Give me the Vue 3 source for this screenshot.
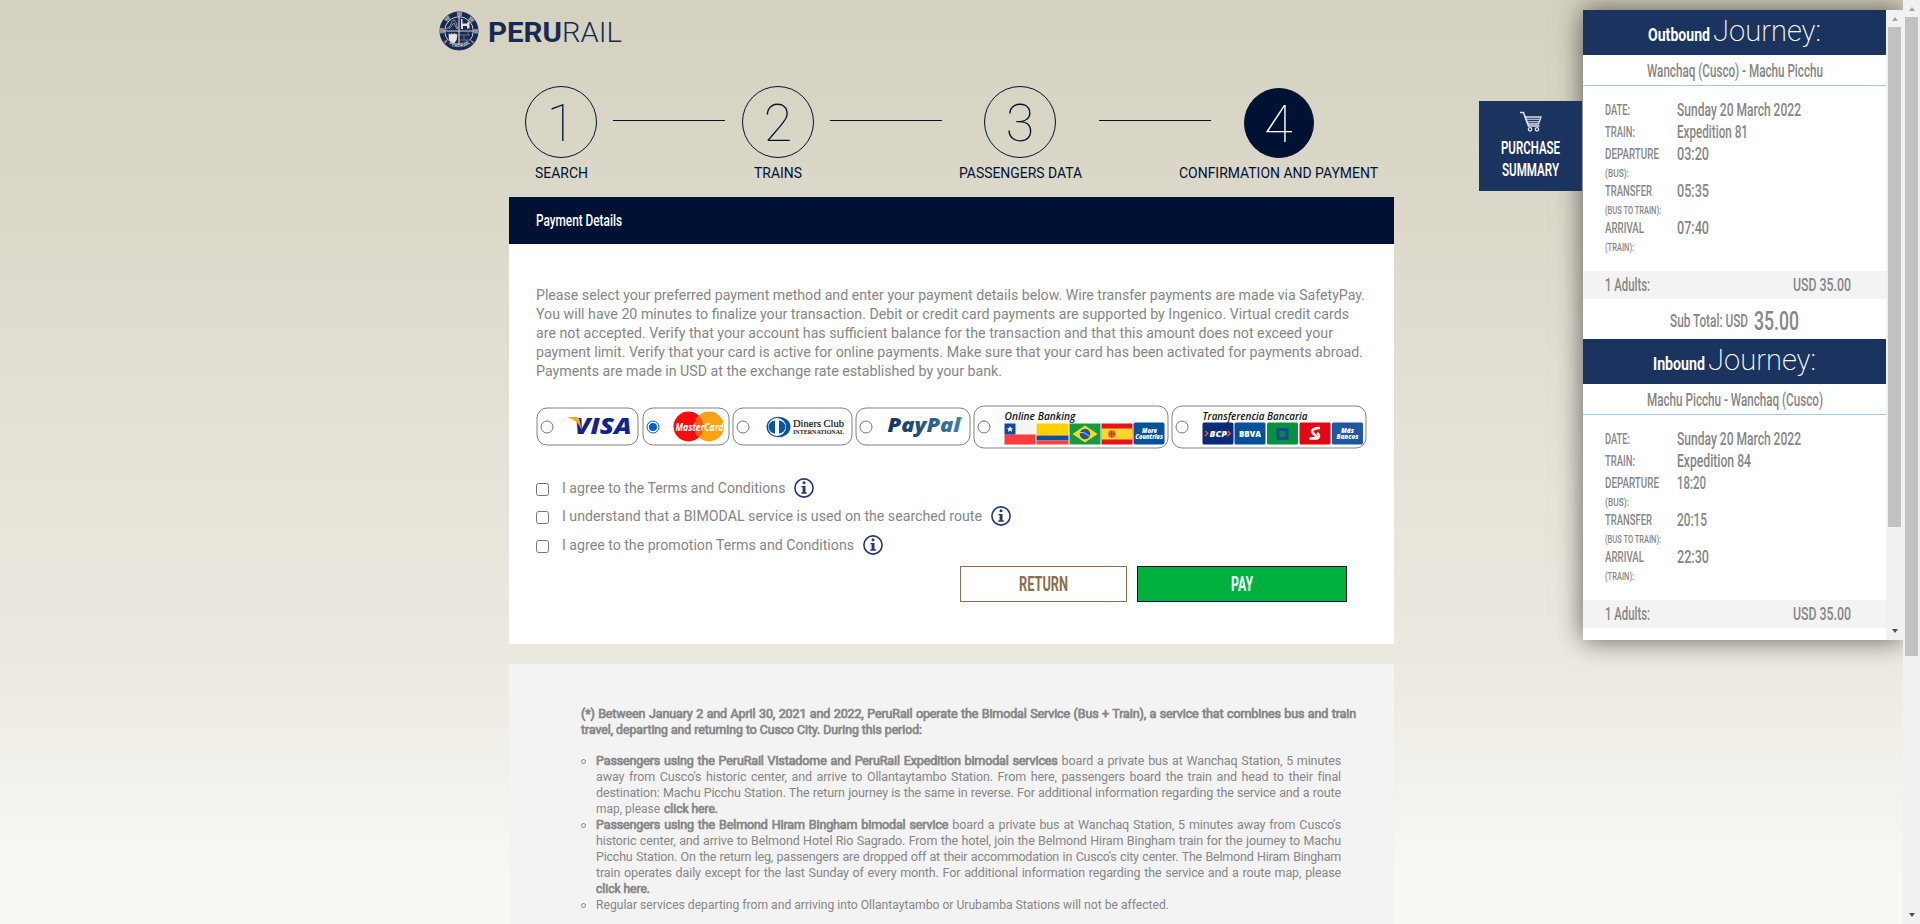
<script setup>
import { h } from 'vue'

const Fit = (p) =>
  h('svg', { width: p.w, height: p.lh, class: 'fit' }, [
    h('text', { x: 0, y: p.b, 'font-size': p.s, textLength: p.w, lengthAdjust: 'spacingAndGlyphs', fill: 'currentColor' }, p.t),
  ])
Fit.props = ['t', 'w', 's', 'lh', 'b']

const steps = [
  { n: '1', label: 'SEARCH', w: 53, line: true },
  { n: '2', label: 'TRAINS', w: 48, line: true },
  { n: '3', label: 'PASSENGERS DATA', w: 123, line: true },
  { n: '4', label: 'CONFIRMATION AND PAYMENT', w: 199, active: true },
]

const intro = [
  ['Please select your preferred payment method and enter your payment details below. Wire transfer payments are made via SafetyPay.', 829],
  ['You will have 20 minutes to finalize your transaction. Debit or credit card payments are supported by Ingenico. Virtual credit cards', 813],
  ['are not accepted. Verify that your account has sufficient balance for the transaction and that this amount does not exceed your', 797],
  ['payment limit. Verify that your card is active for online payments. Make sure that your card has been activated for payments abroad.', 827],
  ['Payments are made in USD at the exchange rate established by your bank.', 466],
]

const agreements = [
  { t: 'I agree to the Terms and Conditions', w: 223.5 },
  { t: 'I understand that a BIMODAL service is used on the searched route', w: 420 },
  { t: 'I agree to the promotion Terms and Conditions', w: 292 },
]

const journeys = [
  {
    dir: 'Outbound', dw: 62, jw: 108, route: 'Wanchaq (Cusco) - Machu Picchu', rw: 176,
    rows: [
      { l: 'DATE:', lw: 25, v: 'Sunday 20 March 2022', vw: 124 },
      { l: 'TRAIN:', lw: 30, v: 'Expedition 81', vw: 71 },
      { l: 'DEPARTURE', lw: 54, v: '03:20', vw: 32, sub: '(BUS):', sw: 24 },
      { l: 'TRANSFER', lw: 47, v: '05:35', vw: 32, sub: '(BUS TO TRAIN):', sw: 56 },
      { l: 'ARRIVAL', lw: 39, v: '07:40', vw: 32, sub: '(TRAIN):', sw: 29 },
    ],
  },
  {
    dir: 'Inbound', dw: 52, jw: 108, route: 'Machu Picchu - Wanchaq (Cusco)', rw: 176,
    rows: [
      { l: 'DATE:', lw: 25, v: 'Sunday 20 March 2022', vw: 124 },
      { l: 'TRAIN:', lw: 30, v: 'Expedition 84', vw: 74 },
      { l: 'DEPARTURE', lw: 54, v: '18:20', vw: 29, sub: '(BUS):', sw: 24 },
      { l: 'TRANSFER', lw: 47, v: '20:15', vw: 30, sub: '(BUS TO TRAIN):', sw: 56 },
      { l: 'ARRIVAL', lw: 39, v: '22:30', vw: 32, sub: '(TRAIN):', sw: 29 },
    ],
  },
]
</script>

<template>
  <div class="page">
    <header class="logo">
      <svg width="40" height="40" viewBox="0 0 40 40">
        <circle cx="20" cy="20" r="19.5" fill="#182a54" />
        <circle cx="20" cy="20" r="17" fill="none" stroke="#b5b6b3" stroke-width="4" stroke-dasharray="5.2 8.15" stroke-dashoffset="2.6" opacity=".75" />
        <circle cx="20" cy="20" r="14.3" fill="#182a54" stroke="#d0cfc3" stroke-width="1" />
        <path d="M20 5.5v29M5.5 20h29" stroke="#d5d2c2" stroke-width="1.2" />
        <path d="M7 18c3-1 4-3 5-5s1.500-4 3-4 2.500 3 3.500 9M10 18l5-6 3 6" fill="none" stroke="#aeb2b8" stroke-width=".8" />
        <path d="M22 8h1.500v4.500h4.500l1-2h1.500v7H28v-2.500h-4V18h-2z" fill="#e2e0d6" />
        <path d="M9.500 22.500l2 1 1-1.500 1.500 1.500 1.500-1.500 1.500 1.500 1.500-.5-1 6-2 3h-3l-2.500-3z" fill="#e9e5d8" />
        <path d="M21 24h10M25 24v5M21 29h10M29 24v-3M27 29v4M22 32h7" fill="none" stroke="#73809b" stroke-width=".8" />
        <path id="rim" d="M7.500 31a17.200 17.200 0 0 0 25 0" fill="none" stroke="#182a54" stroke-width="5" />
        <text font-size="5" font-weight="700" fill="#c9c8bf"><textPath href="#rim" startOffset="3">PERURAIL</textPath></text>
      </svg>
      <div class="wordmark">
        <Fit class="bold" t="PERU" :w="74" :s="28" :lh="40" :b="30.500" />
        <Fit class="light" t="RAIL" :w="60" :s="28.500" :lh="40" :b="30.500" />
      </div>
    </header>

    <main class="content">
      <nav class="steps">
        <template v-for="s in steps" :key="s.n">
          <div class="step" :class="'step-' + s.n">
            <div class="circle" :class="{ active: s.active }">{{ s.n }}</div>
            <Fit class="step-label" :t="s.label" :w="s.w" :s="14" :lh="18" :b="15" />
          </div>
          <i v-if="s.line" class="line" :class="'line-' + s.n"></i>
        </template>
      </nav>

      <section class="card">
        <div class="card-head"><Fit class="medium" t="Payment Details" :w="86" :s="17" :lh="47" :b="29" /></div>
        <div class="card-body">
          <div class="intro">
            <Fit v-for="l in intro" :key="l[0]" :t="l[0]" :w="l[1]" :s="14.500" :lh="19" :b="14" />
          </div>

          <div class="methods">
            <svg width="103" height="46" viewBox="535.500 403.500 103 46">
              <rect class="frame" x="536.500" y="407.500" width="101" height="37" rx="10" />
              <circle class="radio" cx="546.500" cy="426.500" r="6" />
              <text x="574" y="433.500" font-family="Open Sans" font-style="italic" font-weight="800" font-size="23" textLength="57" lengthAdjust="spacingAndGlyphs" fill="#10248c">VISA</text>
              <path d="M566.500 416.500h9.500q2.500 0 3 2.500l2 10q-4-9.500-14.500-12.500z" fill="#f3a621" />
            </svg>
            <svg class="gap4" width="88" height="46" viewBox="641.500 403.500 88 46">
              <rect class="frame" x="642.500" y="407.500" width="86" height="37" rx="10" />
              <circle cx="652.500" cy="426.500" r="6" fill="#fff" stroke="#0560cc" />
              <circle cx="652.500" cy="426.500" r="4" fill="#0560cc" />
              <circle cx="688" cy="426" r="15" fill="#fb0a0d" />
              <circle cx="708.500" cy="426" r="15" fill="#fca113" />
              <path d="M698.200 415a15 15 0 0 1 0 22a15 15 0 0 1 0-22" fill="#f75a18" />
              <text x="675" y="430" font-family="Open Sans" font-style="italic" font-weight="700" font-size="10" textLength="48" lengthAdjust="spacingAndGlyphs" fill="#fff">MasterCard</text>
            </svg>
            <svg width="121" height="46" viewBox="731.500 403.500 121 46">
              <rect class="frame" x="732.500" y="407.500" width="119" height="37" rx="10" />
              <circle class="radio" cx="742.500" cy="426.500" r="6" />
              <ellipse cx="778" cy="426.500" rx="12" ry="10.300" fill="#07569e" />
              <circle cx="776.500" cy="426.500" r="9" fill="#fff" />
              <path d="M774.500 420v13a6.500 6.500 0 0 1 0-13zM778.500 420v13a6.500 6.500 0 0 0 0-13z" fill="#07569e" />
              <text x="792.500" y="426.500" font-family="Liberation Serif" font-size="10.500" textLength="51" lengthAdjust="spacingAndGlyphs" fill="#111" stroke="#111" stroke-width=".2">Diners Club</text>
              <text x="792.500" y="433" font-family="Liberation Serif" font-weight="700" font-size="6.500" textLength="51" lengthAdjust="spacingAndGlyphs" fill="#222">INTERNATIONAL</text>
            </svg>
            <svg width="116" height="46" viewBox="854.500 403.500 116 46">
              <defs>
                <linearGradient id="pp"><stop offset="0" stop-color="#12345c" /><stop offset="1" stop-color="#3f7dad" /></linearGradient>
              </defs>
              <rect class="frame" x="855.500" y="407.500" width="114" height="37" rx="10" />
              <circle class="radio" cx="865.500" cy="426.500" r="6" />
              <text x="887" y="431.500" font-family="Open Sans" font-style="italic" font-weight="800" font-size="20" textLength="73" lengthAdjust="spacingAndGlyphs" fill="url(#pp)">PayPal</text>
              <text x="960" y="420" font-size="4" fill="#3f7dad">™</text>
            </svg>
            <svg width="196" height="46" viewBox="972.500 403.500 196 46">
              <rect class="frame" x="973.500" y="405.500" width="194" height="42" rx="10" />
              <circle class="radio" cx="983.500" cy="426.500" r="6" />
              <text class="bank-title" x="1004" y="419" textLength="71" lengthAdjust="spacingAndGlyphs">Online Banking</text>
              <path d="M1004 423h31v21h-31z" fill="#f5f5f5" /><path d="M1004 434h31v10h-31z" fill="#fd3c3c" /><path d="M1004 423h11v11h-11z" fill="#11479c" />
              <path d="M1009.500 425.500l1 2.200h2.300l-1.800 1.400.7 2.300-2.200-1.400-2.200 1.400.7-2.300-1.800-1.400h2.300z" fill="#fff" />
              <path d="M1036 423h32v12h-32z" fill="#fdd000" /><path d="M1036 435h32v5h-32z" fill="#184a9e" /><path d="M1036 440h32v4h-32z" fill="#f3453b" />
              <path d="M1069 423h31v21h-31z" fill="#139a43" /><path d="M1072 433.500l12.500-8.500 12.500 8.500-12.500 8.500z" fill="#ffdc12" /><circle cx="1084.500" cy="433.500" r="5.300" fill="#21559c" /><path d="M1079.500 432q5-1 9.500 4" fill="none" stroke="#a9d7df" />
              <path d="M1101 423h31v21h-31z" fill="#e9111b" /><path d="M1101 428h31v11h-31z" fill="#ffd52b" /><rect x="1108" y="430" width="7" height="7" rx="2" fill="#cf6538" /><path d="M1111 430v7M1108 433.500h7" stroke="#9d453a" stroke-width=".8" />
              <rect x="1133" y="422" width="31" height="22" rx="2" fill="#07529a" />
              <text class="tile" x="1141.500" y="432" font-size="6" textLength="15" lengthAdjust="spacingAndGlyphs">More</text>
              <text class="tile" x="1134.800" y="438.500" font-size="6" textLength="27.500" lengthAdjust="spacingAndGlyphs">Countries</text>
            </svg>
            <svg width="196" height="46" viewBox="1170.500 403.500 196 46">
              <rect class="frame" x="1171.500" y="405.500" width="194" height="42" rx="10" />
              <circle class="radio" cx="1181.500" cy="426.500" r="6" />
              <text class="bank-title" x="1202" y="419" textLength="105" lengthAdjust="spacingAndGlyphs">Transferencia Bancaria</text>
              <rect x="1202" y="422" width="31" height="22" rx="1.500" fill="#082c77" />
              <text class="tile" x="1209" y="436" font-size="8.500" textLength="17.500" lengthAdjust="spacingAndGlyphs">BCP</text>
              <path d="M1205 430.500l2.300 2.500-3 2.500M1227.500 430.500l2.300 2.500-3 2.500" fill="none" stroke="#f05423" stroke-width="1.500" />
              <rect x="1234" y="422" width="31" height="22" rx="1.500" fill="#04509b" />
              <text class="tile upright" x="1238.500" y="436" font-size="8.500" textLength="22" lengthAdjust="spacingAndGlyphs">BBVA</text>
              <rect x="1266.500" y="422" width="31" height="22" rx="1.500" fill="#059340" /><rect x="1277.500" y="429" width="9" height="9" fill="#0c8641" stroke="#174a9b" stroke-width="3" />
              <rect x="1299" y="422" width="31" height="22" rx="1.500" fill="#e30613" />
              <path d="M1319.500 427.500c-6 0-9 2-7.500 4.500s5 3 3.500 5.500l-6 .8M1309 438h6c3.500 0 5-3.500 1.500-5.500" fill="none" stroke="#fff" stroke-width="2.500" />
              <rect x="1331.500" y="422" width="31" height="22" rx="1.500" fill="#2156a0" />
              <text class="tile" x="1340.500" y="432" font-size="6" textLength="13" lengthAdjust="spacingAndGlyphs">Más</text>
              <text class="tile" x="1336" y="438.500" font-size="6" textLength="22" lengthAdjust="spacingAndGlyphs">Bancos</text>
            </svg>
          </div>

          <div class="agreements">
            <label v-for="a in agreements" :key="a.t" class="agree">
              <input type="checkbox" />
              <Fit :t="a.t" :w="a.w" :s="14.500" :lh="20" :b="15" />
              <svg class="info" width="20" height="20" viewBox="0 0 20 20">
                <circle cx="10" cy="10" r="9.100" fill="none" stroke="#28377a" stroke-width="1.600" />
                <circle cx="10" cy="4.800" r="1.500" fill="#28377a" />
                <path d="M7.500 8h4v6.300h1.300v1.400H7.300v-1.400h1.300V9.300H7.500z" fill="#28377a" />
              </svg>
            </label>
          </div>

          <div class="actions">
            <button class="return"><Fit class="bold" t="RETURN" :w="49" :s="20" :lh="34" :b="24" /></button>
            <button class="pay"><Fit class="bold" t="PAY" :w="22" :s="20" :lh="34" :b="24" /></button>
          </div>
        </div>
      </section>

      <section class="notes">
        <div class="lead">
          <p class="strong just">(*) Between January 2 and April 30, 2021 and 2022, PeruRail operate the Bimodal Service (Bus + Train), a service that combines bus and train</p>
          <Fit class="strong" t="travel, departing and returning to Cusco City. During this period:" :w="341" :s="12.500" :lh="16" :b="12" />
        </div>
        <ul>
          <li>
            <p class="just"><b>Passengers using the PeruRail Vistadome and PeruRail Expedition bimodal services</b> board a private bus at Wanchaq Station, 5 minutes</p>
            <p class="just">away from Cusco's historic center, and arrive to Ollantaytambo Station. From here, passengers board the train and head to their final</p>
            <p class="just">destination: Machu Picchu Station. The return journey is the same in reverse. For additional information regarding the service and a route</p>
            <p class="end"><Fit t="map, please" :w="64" :s="12.500" :lh="16" :b="12" /><Fit class="strong" t="click here." :w="54" :s="12.500" :lh="16" :b="12" /></p>
          </li>
          <li>
            <p class="just"><b>Passengers using the Belmond Hiram Bingham bimodal service</b> board a private bus at Wanchaq Station, 5 minutes away from Cusco's</p>
            <p class="just">historic center, and arrive to Belmond Hotel Rio Sagrado. From the hotel, join the Belmond Hiram Bingham train for the journey to Machu</p>
            <p class="just tight">Picchu Station. On the return leg, passengers are dropped off at their accommodation in Cusco's city center. The Belmond Hiram Bingham</p>
            <p class="just">train operates daily except for the last Sunday of every month. For additional information regarding the service and a route map, please</p>
            <p class="end"><Fit class="strong" t="click here." :w="54" :s="12.500" :lh="16" :b="12" /></p>
          </li>
          <li>
            <p class="end"><Fit t="Regular services departing from and arriving into Ollantaytambo or Urubamba Stations will not be affected." :w="573" :s="12.500" :lh="16" :b="12" /></p>
          </li>
        </ul>
      </section>
    </main>

    <aside class="summary">
      <div class="tab">
        <svg width="24" height="22" viewBox="0 0 24 22" fill="none" stroke="#dce0e8">
          <path d="M1 1.500h3.500l5 13.500h11" stroke-width="1.600" />
          <path d="M6 6h16l-2.500 7H9z" stroke-width="1.300" />
          <path d="M7 8.300h14M8 10.700h12" stroke-width="1.100" />
          <circle cx="11" cy="18.300" r="1.700" stroke-width="1.300" /><circle cx="18" cy="18.300" r="1.700" stroke-width="1.300" />
        </svg>
        <Fit class="semi" t="PURCHASE" :w="59" :s="18" :lh="22" :b="18" />
        <Fit class="semi" t="SUMMARY" :w="57" :s="18" :lh="22" :b="18" />
      </div>
      <div class="panel">
        <div class="scroll">
          <section v-for="j in journeys" :key="j.dir" class="journey">
            <h2>
              <Fit class="bold" :t="j.dir" :w="j.dw" :s="18.500" :lh="45" :b="31" />
              <Fit class="thin" t="Journey:" :w="j.jw" :s="30" :lh="45" :b="31" />
            </h2>
            <div class="route"><Fit :t="j.route" :w="j.rw" :s="17.500" :lh="30" :b="22" /></div>
            <div class="details">
              <div v-for="r in j.rows" :key="r.l" class="row">
                <div class="key">
                  <Fit :t="r.l" :w="r.lw" :s="15.500" :lh="22" :b="15" />
                  <Fit v-if="r.sub" :t="r.sub" :w="r.sw" :s="10.500" :lh="15" :b="11" />
                </div>
                <Fit :t="r.v" :w="r.vw" :s="17.500" :lh="22" :b="16" />
              </div>
            </div>
            <div class="fare">
              <Fit t="1 Adults:" :w="45" :s="17.500" :lh="28" :b="20" />
              <Fit t="USD 35.00" :w="58" :s="17.500" :lh="28" :b="20" />
            </div>
            <div class="subtotal">
              <Fit t="Sub Total: USD" :w="78" :s="17.500" :lh="40" :b="28" />
              <Fit t="35.00" :w="45" :s="25" :lh="40" :b="31" />
            </div>
          </section>
        </div>
        <div class="bar">
          <i class="up"></i><i class="thumb"></i><i class="down"></i>
        </div>
      </div>
    </aside>

    <div class="bar page-bar"><i class="up"></i><i class="thumb"></i><i class="down"></i></div>
  </div>
</template>

<style>
html, body { margin: 0; overflow: hidden; }
</style>

<style scoped>
.page {
  position: relative; width: 1920px; height: 924px; overflow: hidden;
  font-family: Roboto, "Liberation Sans", sans-serif; color: #868686;
  background: linear-gradient(#d5d1bf 0, #dbd8c9 190px, #e2dfd3 380px, #ece9e1 660px, #f8f7f3 870px, #f8f7f3 100%);
}
.fit { display: block; flex: none; overflow: visible; white-space: pre; }
.bold { font-weight: 700; }
.semi { font-weight: 600; }
.medium { font-weight: 500; }
.light { font-weight: 300; }
.strong, b { font-weight: 400; -webkit-text-stroke: .7px #868686; }
.fit.strong { stroke: #868686; stroke-width: .7px; }
.thin { font-weight: 200; }
p { margin: 0; }

.logo { display: flex; padding: 11px 0 0 438.500px; height: 75px; box-sizing: border-box; color: #182a54; }
.wordmark { display: flex; margin-left: 9.500px; }

.content { width: 885px; margin-left: 509px; }
.steps { display: flex; height: 122px; align-items: flex-start; color: #001233; }
.step { display: flex; flex-direction: column; align-items: center; flex: none; margin-top: 11px; }
.step-1 { width: 72px; margin-left: 16px; }
.step-2 { width: 72px; margin-left: 17px; }
.step-3 { width: 124px; margin-left: 16px; }
.step-4 { width: 200px; margin-left: -32.500px; }
.circle {
  width: 72px; height: 72px; box-sizing: border-box; border: 1px solid #001233; border-radius: 50%;
  font-size: 52px; font-weight: 100; line-height: 74px; text-align: center;
}
.circle.active { width: 70px; height: 70px; margin-top: 2px; background: #001233; color: #fff; line-height: 71px; }
.step-label { margin-top: 5px; font-weight: 400; }
.line { flex: none; width: 112px; height: 1px; margin: 45px 0 0 16px; background: #001233; }
.line-3 { margin-left: 17px; }

.card { height: 447px; background: #fff; }
.card-head { height: 47px; padding-left: 26px; background: #001233; color: #fff; }
.card-body { padding: 42px 0 0 26px; }
.intro { height: 95px; }
.intro .fit, .card-head .fit { margin-left: .500px; }
.methods { display: flex; gap: 2px; margin: 22.500px 0 0 .500px; }
.gap4 { margin-left: 1px; }
.frame { fill: #fff; stroke: #828282; }
.radio { fill: #fff; stroke: #767676; }
.bank-title { font: italic 600 11.500px "Open Sans", sans-serif; fill: #111; }
.tile { font-family: "Open Sans", sans-serif; font-style: italic; font-weight: 800; fill: #fff; }
.upright { font-style: normal; }
.agreements { display: grid; gap: 8.400px; margin: 28.500px 0 0 1px; }
.agree { display: flex; align-items: flex-start; height: 20px; }
.agree input { width: 13px; height: 13px; margin: 5px 13px 0 0; }
.info { margin-left: 8.500px; }
.actions { display: flex; gap: 10px; margin: 11.500px 0 0 425px; }
button { height: 36px; padding: 0; display: flex; justify-content: center; box-sizing: border-box; font-family: inherit; }
.return { width: 167px; border: 1px solid #8b6f4b; background: #fff; color: #8b6f4b; }
.pay { width: 210px; border: 1px solid #001233; background: #00b140; color: #fff; }

.notes { height: 260px; margin-top: 20px; padding-top: 42px; box-sizing: border-box; background: #f3f3f3; font-size: 12.500px; line-height: 16px; }
.lead { width: 775px; margin-left: 72px; }
.just { height: 16px; text-align: justify; text-align-last: justify; letter-spacing: -.120px; }
.tight { letter-spacing: -.220px; }
.end { display: flex; gap: 4px; }
ul { list-style: none; margin: 15px 0 0 72px; padding: 0; width: 760px; }
li { position: relative; padding-left: 15px; }
li::before { content: ""; position: absolute; left: 0; top: 6px; width: 3px; height: 3px; border: 1px solid #868686; border-radius: 50%; }

.summary { position: absolute; top: 10px; right: 17px; display: flex; align-items: flex-start; }
.tab { position: relative; z-index: 1; width: 103px; height: 90px; margin: 91px 1px 0 0; padding-top: 10px; box-sizing: border-box; display: flex; flex-direction: column; align-items: center; background: #1b335f; color: #fff; }
.tab svg:first-child { margin: 0 0 3px 0; }
.panel { display: flex; width: 320px; height: 630px; background: #fff; box-shadow: 0 0 25px rgba(0, 0, 0, .6); font-weight: 500; }
.scroll { width: 303px; overflow: hidden; }
.journey { height: 329px; }
h2 { display: flex; justify-content: center; gap: 3px; height: 45px; margin: 0; background: #1b335f; color: #fff; }
.route { display: flex; justify-content: center; height: 30px; border-bottom: 1px solid #a9c6dc; }
.details { height: 185px; padding: 14px 0 0 22px; box-sizing: border-box; }
.row { display: flex; }
.key { width: 72px; }
.fare { display: flex; justify-content: space-between; height: 28px; padding: 0 35px 0 22px; background: #f3f3f3; }
.subtotal { display: flex; gap: 6px; height: 40px; padding-left: 87px; }

.bar { width: 17px; height: 100%; display: flex; flex-direction: column; align-items: center; background: #f1f1f1; }
.up { border: 3.500px solid transparent; border-top: 0; border-bottom: 4px solid #a3a3a3; margin: 7px 0 6px; }
.down { border: 3.500px solid transparent; border-bottom: 0; border-top: 4px solid #505050; margin: auto 0 7px; }
.thumb { width: 13px; height: 500px; background: #c1c1c1; }
.page-bar { position: absolute; right: 0; top: 0; }
.page-bar .thumb { height: 639px; }
</style>
